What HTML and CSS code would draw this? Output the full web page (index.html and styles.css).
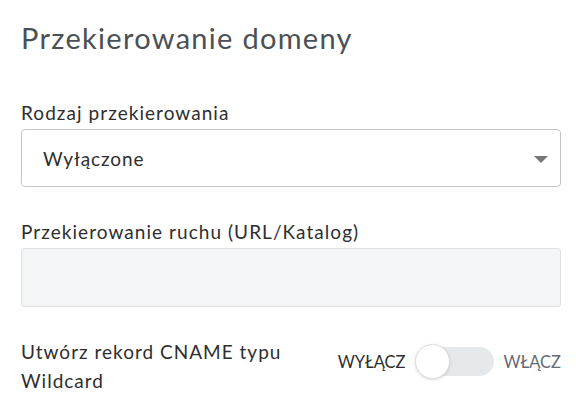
FILE: index.html
```html
<!DOCTYPE html>
<html lang="pl">
<head>
<meta charset="utf-8">
<link rel="stylesheet" href="styles.css">
</head>
<body>
<div class="panel">
  <h1 class="title">Przekierowanie domeny</h1>
  <div class="field field-first">
    <label class="label">Rodzaj przekierowania</label>
    <div class="select">
      <span class="select-value">Wyłączone</span>
      <span class="arrow"></span>
    </div>
  </div>
  <div class="field field-second">
    <label class="label">Przekierowanie ruchu (URL/Katalog)</label>
    <div class="input"></div>
  </div>
  <div class="switch-row">
    <div class="switch-label">Utwórz rekord CNAME typu Wildcard</div>
    <div class="switch">
      <span class="sw-off">WYŁĄCZ</span>
      <span class="track"><span class="knob"></span></span>
      <span class="sw-on">WŁĄCZ</span>
    </div>
  </div>
</div>
</body>
</html>
```
FILE: styles.css
```css
html, body {
  margin: 0;
  padding: 0;
  background: #ffffff;
}
body {
  font-family: "Lato", "Liberation Sans", sans-serif;
  color: #2e2e2e;
}
.panel {
  padding: 20px 25px 0 21px;
}
.title {
  margin: 0;
  font-size: 29px;
  font-weight: 400;
  color: #4b5056;
  line-height: 36px;
  letter-spacing: 1.3px;
}
.field-first {
  margin-top: 45px;
}
.field-second {
  margin-top: 33px;
}
.label {
  display: block;
  font-size: 19px;
  line-height: 24px;
  letter-spacing: 1.05px;
  color: #2e2e2e;
  margin-bottom: 4px;
}
.select {
  height: 58px;
  box-sizing: border-box;
  border: 1px solid #c4c4c4;
  border-radius: 4px;
  display: flex;
  align-items: center;
  justify-content: space-between;
  padding: 0 12px 0 21px;
}
.select-value {
  font-size: 19px;
  letter-spacing: 0.9px;
  color: #2e2e2e;
}
.arrow {
  width: 0;
  height: 0;
  border-left: 7.5px solid transparent;
  border-right: 7.5px solid transparent;
  border-top: 7px solid #777;
  margin-top: 2px;
}
.input {
  height: 59px;
  box-sizing: border-box;
  border: 1px solid #dfe1e3;
  border-radius: 3px;
  background: #f4f5f6;
}
.switch-row {
  margin-top: 30px;
  display: flex;
  align-items: flex-start;
  justify-content: space-between;
}
.switch-label {
  width: 290px;
  font-size: 19px;
  line-height: 29px;
  letter-spacing: 1px;
  color: #2e2e2e;
}
.switch {
  display: flex;
  align-items: center;
  margin-top: 10px;
}
.sw-off {
  font-size: 16.5px;
  color: #2e2e2e;
  margin-right: 10px;
}
.sw-on {
  font-size: 16.5px;
  color: #656b71;
  margin-left: 10px;
}
.track {
  position: relative;
  width: 78px;
  height: 29px;
  border-radius: 15px;
  background: #e6e9ec;
}
.knob {
  position: absolute;
  left: -1px;
  top: -3px;
  width: 33px;
  height: 33px;
  border-radius: 50%;
  background: #fff;
  border: 1px solid #dcdcdc;
  box-shadow: 0 1px 3px rgba(0,0,0,0.15);
}
```
